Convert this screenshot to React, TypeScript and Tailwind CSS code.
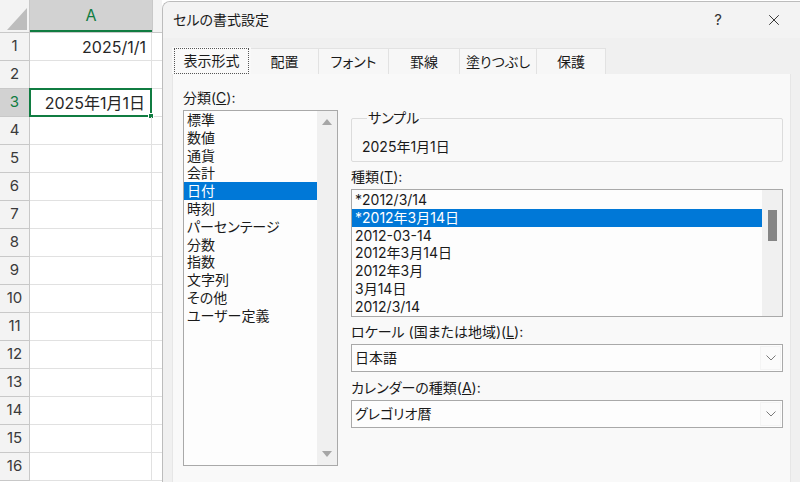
import { X } from "lucide-react";

const rowNumbers = Array.from({ length: 16 }, (_, i) => i + 1);

const categories = [
  "標準",
  "数値",
  "通貨",
  "会計",
  "日付",
  "時刻",
  "パーセンテージ",
  "分数",
  "指数",
  "文字列",
  "その他",
  "ユーザー定義",
];

const formats = [
  "*2012/3/14",
  "*2012年3月14日",
  "2012-03-14",
  "2012年3月14日",
  "2012年3月",
  "3月14日",
  "2012/3/14",
];

const tabs = [
  { label: "表示形式", w: "w-[79px]" },
  { label: "配置", w: "w-[68px]" },
  { label: "フォント", w: "w-[70px]" },
  { label: "罫線", w: "w-[71px]" },
  { label: "塗りつぶし", w: "w-[77px]" },
  { label: "保護", w: "w-[69px]" },
];

const Sheet = () => {
  return (
    <div className="w-[162px] shrink-0 flex flex-col bg-white text-[#262626] font-['Inter','Noto_Sans_CJK_JP',sans-serif]">
      {/* Column headers */}
      <div className="flex h-[33px] shrink-0 border-b border-[#c8c8c8]">
        <div className="w-[30px] shrink-0 bg-[#f3f3f3] border-r border-[#c8c8c8] flex items-end justify-end pr-[2px] pb-[2px]">
          <svg width="20" height="22" viewBox="0 0 20 22">
            <polygon points="20,0 20,22 0,22" fill="#bdbdbd" />
          </svg>
        </div>
        <div className="w-[122px] shrink-0 bg-[#d2d2d2] border-b-2 border-[#107c41] flex items-center justify-center text-[16px] text-[#107c41]">
          A
        </div>
        <div className="flex-1 bg-[#f3f3f3] border-l border-[#c8c8c8]" />
      </div>

      {/* Rows */}
      {rowNumbers.map((n) => (
        <div key={n} className="flex h-[28px] shrink-0">
          <div
            className={`w-[30px] shrink-0 border-r border-b border-[#c8c8c8] flex items-center justify-center text-[15px] ${
              n === 3 ? "bg-[#d2d2d2] text-[#107c41]" : "bg-[#f3f3f3] text-[#3a3a3a]"
            }`}
          >
            {n}
          </div>
          <div className="w-[122px] shrink-0 relative border-b border-r border-[#e1e1e1] flex items-center justify-end pr-[5px] text-[16px]">
            {n === 1 && "2025/1/1"}
            {n === 3 && (
              <>
                <span className="pr-[1px]">2025年1月1日</span>
                <div className="absolute -inset-[1px] border-2 border-[#107c41]" />
                <div className="absolute -right-[3px] -bottom-[3px] w-[6px] h-[6px] bg-[#107c41] border border-white" />
              </>
            )}
          </div>
          <div className="flex-1 border-b border-[#e1e1e1]" />
        </div>
      ))}
    </div>
  );
};

const ScrollArrow = ({ up }: { up: boolean }) => (
  <svg width="10" height="6" viewBox="0 0 10 6">
    <polygon points={up ? "5,0 10,6 0,6" : "0,0 10,0 5,6"} fill="#a6a6a6" />
  </svg>
);

const Chevron = () => (
  <svg width="10" height="6" viewBox="0 0 10 6" fill="none">
    <path d="M0.5 0.5 L5 5 L9.5 0.5" stroke="#7a7a7a" strokeWidth="1" />
  </svg>
);

const Combo = ({ value }: { value: string }) => (
  <div className="h-[28px] w-[432px] border border-[#a9a9a9] bg-[#fdfdfd] flex items-center">
    <span className="flex-1 pl-[3px]">{value}</span>
    <div className="w-[21px] h-[24px] mr-[1px] border border-[#f4f4f4] bg-[#fbfbfb] flex items-center justify-center">
      <Chevron />
    </div>
  </div>
);

const Dialog = () => {
  return (
    <div className="flex-1 mt-[1px] flex flex-col bg-[#f0f0f0] border-l border-t border-[#bcbcbc] rounded-tl-[8px] overflow-hidden text-[14px] leading-[18px] text-[#1a1a1a] font-['Inter','Noto_Sans_CJK_JP',sans-serif] [font-feature-settings:'palt']">
      {/* Title bar */}
      <div className="h-[36px] shrink-0 flex items-center pl-[10px] bg-[#f3f3f3]">
        <span>セルの書式設定</span>
        <span className="ml-auto text-[15px] text-[#333]">?</span>
        <X size={18} strokeWidth={1.2} className="ml-[43px] mr-[17px] text-[#222]" />
      </div>

      {/* Tabs */}
      <div className="flex h-[27px] mt-[9px] pl-[9px] shrink-0">
        {tabs.map((t, i) =>
          i === 0 ? (
            <div key={t.label} className={`${t.w} h-[27px] bg-[#f9f9f9] px-[2px] pt-[1px]`}>
              <div className="h-full border border-dotted border-[#555] flex items-center justify-center">
                {t.label}
              </div>
            </div>
          ) : (
            <div
              key={t.label}
              className={`${t.w} h-[26px] mt-[1px] bg-[#f7f7f7] border-r border-t border-[#e2e2e2] flex items-center justify-center`}
            >
              {t.label}
            </div>
          )
        )}
      </div>

      {/* Panel */}
      <div className="flex-1 ml-[9px] mr-[9px] bg-[#f9f9f9] border-l border-r border-[#e6e6e6] flex items-start pl-[10px] pt-[15px]">
        {/* 分類 */}
        <div className="w-[155px] shrink-0 flex flex-col">
          <div className="h-[18px]">
            分類(<span className="underline">C</span>):
          </div>
          <div className="mt-[3px] h-[356px] border border-[#a9a9a9] bg-[#fdfdfd] flex">
            <div className="flex-1">
              {categories.map((c) => (
                <div
                  key={c}
                  className={`h-[17.8px] pl-[3px] whitespace-nowrap ${
                    c === "日付" ? "bg-[#0078d7] text-white" : ""
                  }`}
                >
                  {c}
                </div>
              ))}
            </div>
            <div className="w-[20px] bg-[#f0f0f0] flex flex-col items-center justify-between py-[8px]">
              <ScrollArrow up />
              <ScrollArrow up={false} />
            </div>
          </div>
        </div>

        {/* Right column */}
        <div className="ml-[13px] w-[432px] flex flex-col mt-[20px]">
          <fieldset className="border border-[#dcdcdc] rounded-[2px] px-[10px] pt-[11px] pb-[5px] m-0">
            <legend className="ml-[5px] px-[1px]">サンプル</legend>
            <div>2025年1月1日</div>
          </fieldset>

          <div className="mt-[6px] h-[18px]">
            種類(<span className="underline">T</span>):
          </div>
          <div className="mt-[3px] h-[128px] border border-[#a9a9a9] bg-[#fdfdfd] flex">
            <div className="flex-1 pt-[1px]">
              {formats.map((f, i) => (
                <div
                  key={f + i}
                  className={`h-[17.8px] pl-[3px] whitespace-nowrap ${
                    i === 1 ? "bg-[#0078d7] text-white" : ""
                  }`}
                >
                  {f}
                </div>
              ))}
            </div>
            <div className="w-[20px] bg-[#f0f0f0] flex justify-center pt-[20px]">
              <div className="w-[9px] h-[31px] bg-[#858585]" />
            </div>
          </div>

          <div className="mt-[6px] h-[18px]">
            ロケール (国または地域)(<span className="underline">L</span>):
          </div>
          <div className="mt-[3px]">
            <Combo value="日本語" />
          </div>

          <div className="mt-[7px] h-[18px]">
            カレンダーの種類(<span className="underline">A</span>):
          </div>
          <div className="mt-[3px]">
            <Combo value="グレゴリオ暦" />
          </div>
        </div>
      </div>
    </div>
  );
};

export default function App() {
  return (
    <div className="w-[800px] h-[482px] flex overflow-hidden bg-white">
      <Sheet />
      <Dialog />
    </div>
  );
}
